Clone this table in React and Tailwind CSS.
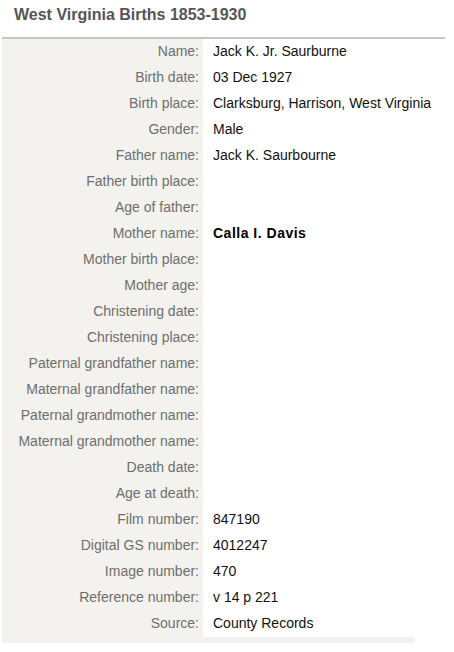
const rows = [
  ["Name:", "Jack K. Jr. Saurburne"],
  ["Birth date:", "03 Dec 1927"],
  ["Birth place:", "Clarksburg, Harrison, West Virginia"],
  ["Gender:", "Male"],
  ["Father name:", "Jack K. Saurbourne"],
  ["Father birth place:", ""],
  ["Age of father:", ""],
  ["Mother name:", "Calla I. Davis", true],
  ["Mother birth place:", ""],
  ["Mother age:", ""],
  ["Christening date:", ""],
  ["Christening place:", ""],
  ["Paternal grandfather name:", ""],
  ["Maternal grandfather name:", ""],
  ["Paternal grandmother name:", ""],
  ["Maternal grandmother name:", ""],
  ["Death date:", ""],
  ["Age at death:", ""],
  ["Film number:", "847190"],
  ["Digital GS number:", "4012247"],
  ["Image number:", "470"],
  ["Reference number:", "v 14 p 221"],
  ["Source:", "County Records"],
];

export default function App() {
  return (
    <div className="w-[454px] h-[652px] bg-white" style={{ fontFamily: '"Liberation Sans", Arial, sans-serif' }}>
      <div className="pl-[14px] pt-[5px] h-[37px] text-[16px] font-bold text-[#555555] leading-[20px]">
        West Virginia Births 1853-1930
      </div>
      <div className="ml-[2px] w-[443px] h-[2px] bg-[#c8c6c2]"></div>
      <div className="ml-[2px] w-[413px]">
        <div className="flex flex-col">
          {rows.map(([label, value, bold], i) => (
            <div key={i} className="flex h-[26px] items-center">
              <div className="w-[201px] shrink-0 h-full bg-[#f3f2ee] flex items-center justify-end pr-[4px] pb-[2px] text-[14px] text-[#6e6e6e] whitespace-nowrap">
                {label}
              </div>
              <div className={"pl-[10px] pb-[2px] text-[14px] whitespace-nowrap " + (bold ? "font-bold tracking-[0.5px] text-black" : "text-[#111111]")}>
                {value}
              </div>
            </div>
          ))}
        </div>
        <div className="h-[6px] bg-[#f3f2ee]"></div>
      </div>
    </div>
  );
}
